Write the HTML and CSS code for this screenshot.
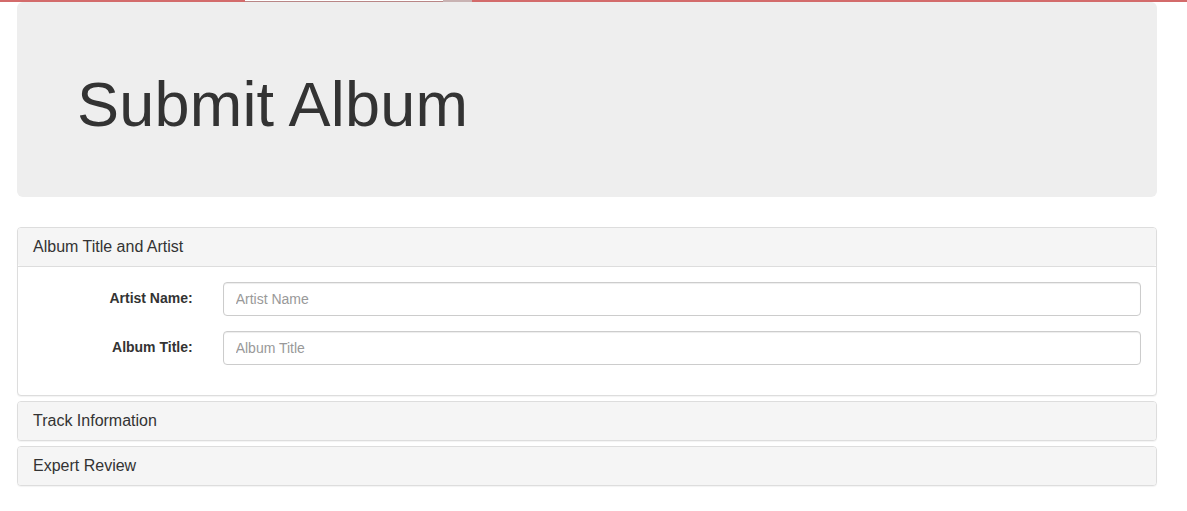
FILE: index.html
```html
<!DOCTYPE html>
<html>
<head>
<meta charset="utf-8">
<title>Submit Album</title>
<link rel="stylesheet" href="styles.css">
</head>
<body>
<div class="topbar"><span class="tb-white"></span><span class="tb-gray"></span></div>
<div class="container">
  <div class="jumbotron">
    <h1>Submit Album</h1>
  </div>
  <div class="panel-group">
    <div class="panel">
      <div class="panel-heading">Album Title and Artist</div>
      <div class="panel-body">
        <form class="form-horizontal">
          <div class="form-group">
            <label class="control-label">Artist Name:</label>
            <div class="field"><input class="form-control" type="text" placeholder="Artist Name"></div>
          </div>
          <div class="form-group">
            <label class="control-label">Album Title:</label>
            <div class="field"><input class="form-control" type="text" placeholder="Album Title"></div>
          </div>
        </form>
      </div>
    </div>
    <div class="panel">
      <div class="panel-heading">Track Information</div>
    </div>
    <div class="panel">
      <div class="panel-heading">Expert Review</div>
    </div>
  </div>
</div>
</body>
</html>
```
FILE: styles.css
```css
* { box-sizing: border-box; }
html, body { margin: 0; padding: 0; }
body {
  font-family: "Liberation Sans", Arial, Helvetica, sans-serif;
  font-size: 14px;
  line-height: 1.42857;
  color: #333;
  background: #fff;
}
.topbar {
  position: fixed;
  top: 0; left: 0; right: 0;
  height: 2px;
  background: #d36b6b;
  z-index: 10;
}
.tb-white {
  position: absolute;
  left: 245px; top: 0;
  width: 198px; height: 2px;
  background: #fff;
  border-bottom: 1px solid #b98686;
}
.tb-gray {
  position: absolute;
  left: 443px; top: 0;
  width: 29px; height: 2px;
  background: #c9b3b3;
}
.container {
  width: 1140px;
  margin-left: 17px;
  padding-top: 2px;
}
.jumbotron {
  background: #eee;
  border-radius: 6px;
  padding: 48px 60px;
  margin-bottom: 30px;
}
.jumbotron h1 {
  font-size: 63px;
  font-weight: 500;
  line-height: 1.1;
  letter-spacing: 0.2px;
  margin: 20px 0 10px;
  color: #333;
}
.panel-group { margin-bottom: 20px; }
.panel {
  border: 1px solid #ddd;
  border-radius: 4px;
  background: #fff;
  box-shadow: 0 1px 1px rgba(0,0,0,.05);
}
.panel + .panel { margin-top: 5px; }
.panel-heading {
  background: #f5f5f5;
  padding: 10px 15px;
  font-size: 16px;
  line-height: 18px;
  color: #333;
  border-radius: 3px;
}
.panel-body {
  border-top: 1px solid #ddd;
  padding: 15px;
}
.form-horizontal { margin: 0 -15px; }
.form-group {
  display: flex;
  margin-bottom: 15px;
}
.control-label {
  width: 189.67px;
  padding: 7px 15px 0;
  text-align: right;
  font-weight: bold;
}
.field {
  flex: 1;
  padding: 0 15px;
}
.form-control {
  display: block;
  width: 100%;
  height: 34px;
  padding: 6px 12px;
  font-family: inherit;
  font-size: 14px;
  line-height: 1.42857;
  color: #555;
  background: #fff;
  border: 1px solid #ccc;
  border-radius: 4px;
  box-shadow: inset 0 1px 1px rgba(0,0,0,.075);
}
.form-control::placeholder { color: #999; }
```
